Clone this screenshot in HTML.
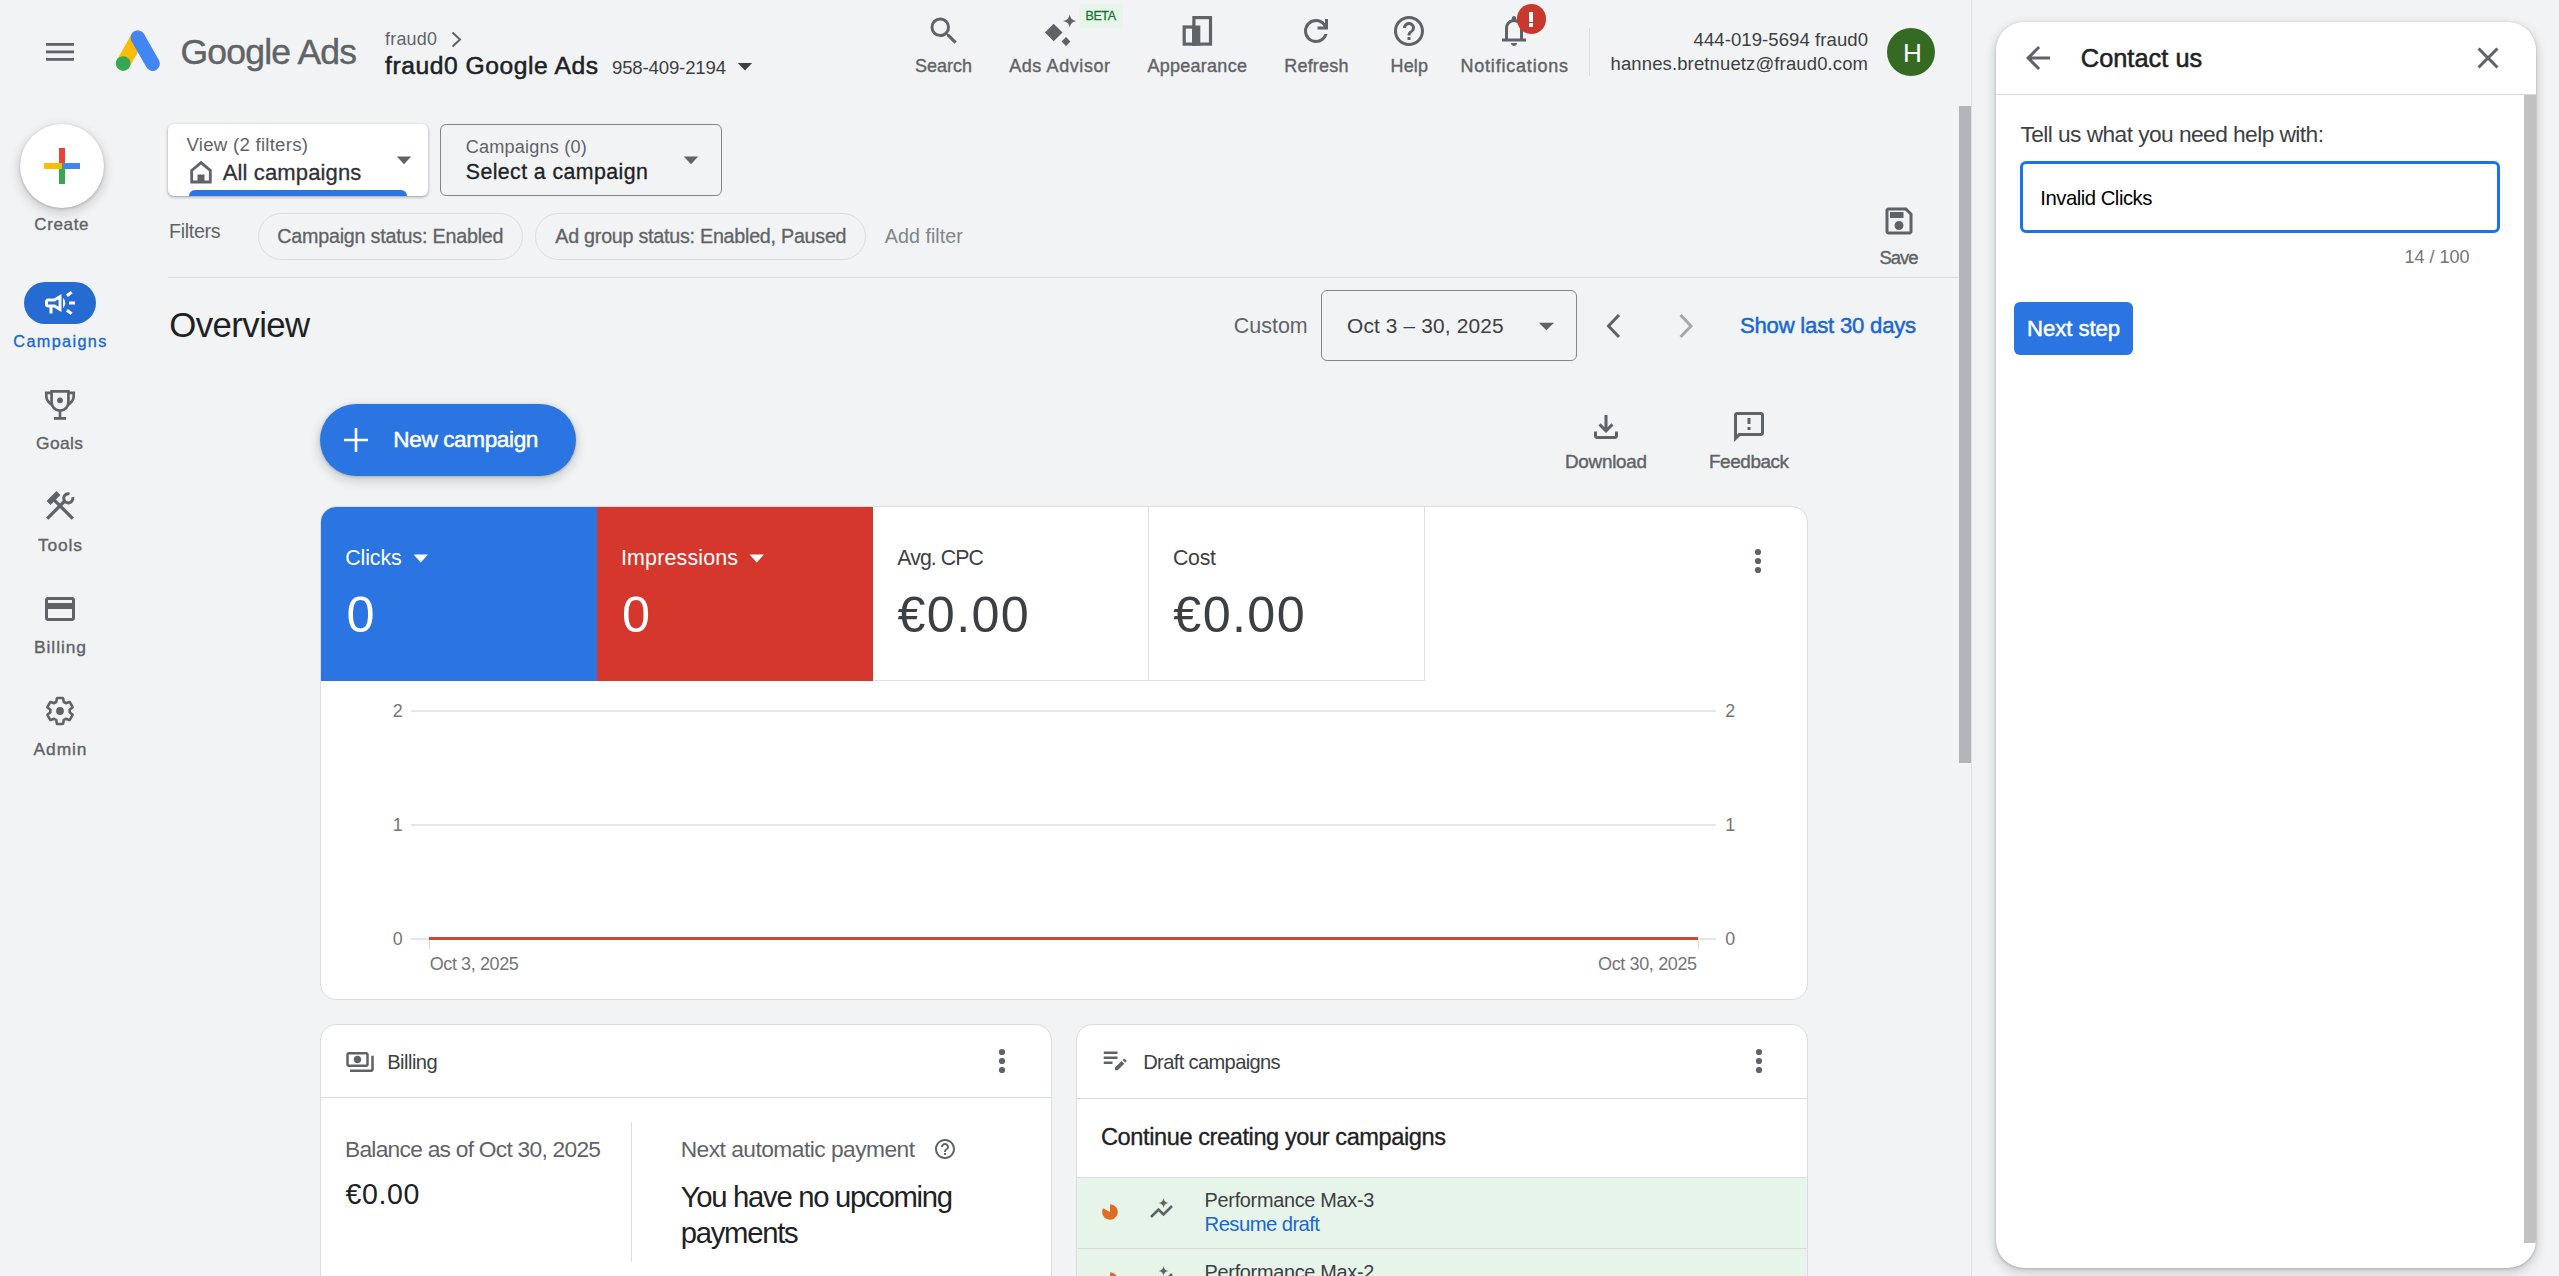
<!DOCTYPE html>
<html><head><meta charset="utf-8"><title>Google Ads</title>
<style>
html,body{margin:0;padding:0;width:2559px;height:1276px;overflow:hidden;background:#f1f3f4;font-family:'Liberation Sans', sans-serif;}
body>*{box-sizing:border-box;}
</style></head><body>
<svg style="position:absolute;left:46px;top:43px;" width="28" height="18" viewBox="0 0 28 18"><rect x="0" y="0" width="28" height="2.8" fill="#5f6368"/><rect x="0" y="7.5" width="28" height="2.8" fill="#5f6368"/><rect x="0" y="15" width="28" height="2.8" fill="#5f6368"/></svg>
<svg style="position:absolute;left:110px;top:25px;" width="56" height="50" viewBox="0 0 56 50">
<line x1="13.2" y1="38.5" x2="27.8" y2="12.6" stroke="#fbbc04" stroke-width="14.4" stroke-linecap="round"/>
<line x1="27.8" y1="12.6" x2="42.7" y2="38.7" stroke="#4285f4" stroke-width="14.4" stroke-linecap="round"/>
<circle cx="13.2" cy="38.5" r="7.3" fill="#34a853"/></svg>
<div style="position:absolute;top:35.25px;font-size:35.50px;line-height:35.50px;color:#5f6368;font-weight:400;white-space:pre;-webkit-text-stroke:0.45px #5f6368;letter-spacing:-0.785px;left:180.50px;">Google Ads</div>
<div style="position:absolute;top:30.82px;font-size:17.93px;line-height:17.93px;color:#5f6368;font-weight:400;white-space:pre;letter-spacing:0.234px;left:385.00px;">fraud0</div>
<svg style="position:absolute;left:450px;top:30px;" width="14" height="19" viewBox="0 0 14 19"><path d="M2.5 2.5 L10 9.5 L2.5 16.5" fill="none" stroke="#5f6368" stroke-width="2"/></svg>
<div style="position:absolute;top:54.34px;font-size:24.64px;line-height:24.64px;color:#202124;font-weight:400;white-space:pre;-webkit-text-stroke:0.52px #202124;letter-spacing:0.562px;left:385.00px;">fraud0 Google Ads</div>
<div style="position:absolute;top:59.48px;font-size:18.57px;line-height:18.57px;color:#3c4043;font-weight:400;white-space:pre;letter-spacing:-0.146px;left:612.00px;">958-409-2194</div>
<svg style="position:absolute;left:737px;top:62px;" width="16" height="9" viewBox="0 0 16 9"><path d="M0.8 1 L15.2 1 L8 8.6 Z" fill="#3c4043"/></svg>
<svg style="position:absolute;left:925.5px;top:12.8px;" width="36" height="36" viewBox="0 0 24 24"><path fill="#5f6368" d="M15.5 14h-.79l-.28-.27A6.471 6.471 0 0 0 16 9.5 6.5 6.5 0 1 0 9.5 16c1.61 0 3.09-.59 4.23-1.57l.27.28v.79l5 4.99L20.49 19l-4.99-5zm-6 0C7.01 14 5 11.99 5 9.5S7.01 5 9.5 5 14 7.01 14 9.5 11.99 14 9.5 14z"/></svg>
<svg style="position:absolute;left:1035px;top:8px;" width="50" height="50" viewBox="0 0 50 50">
<path d="M18.7 15.7 L27.5 24.5 L18.7 33.3 L9.9 24.5 Z" fill="#5f6368"/>
<path d="M31 29.1 L35.4 33.5 L31 37.9 L26.6 33.5 Z" fill="#5f6368"/>
<path d="M34.7 6.4 Q35.6 12.1 41.3 13 Q35.6 13.9 34.7 19.6 Q33.8 13.9 28.1 13 Q33.8 12.1 34.7 6.4 Z" fill="#5f6368"/></svg>
<div style="position:absolute;left:1079.4px;top:4px;width:43.2px;height:24px;background:#e6f4ea;border-radius:4px;"></div>
<div style="position:absolute;top:10.35px;font-size:12.46px;line-height:12.46px;color:#137333;font-weight:400;white-space:pre;-webkit-text-stroke:0.26px #137333;letter-spacing:-0.370px;left:1085.50px;">BETA</div>
<svg style="position:absolute;left:1182px;top:15px;" width="32" height="32" viewBox="0 0 32 32">
<rect x="11.9" y="2.6" width="16.6" height="26.5" fill="none" stroke="#5f6368" stroke-width="3.2"/>
<rect x="2.2" y="12" width="9.7" height="17.1" fill="none" stroke="#5f6368" stroke-width="3.2"/>
<rect x="10.3" y="10.5" width="8" height="20.2" fill="#5f6368"/></svg>
<svg style="position:absolute;left:1298.4px;top:12.8px;" width="36" height="36" viewBox="0 0 24 24"><path fill="#5f6368" d="M12 20q-3.35 0-5.675-2.325Q4 15.35 4 12q0-3.35 2.325-5.675Q8.65 4 12 4q1.725 0 3.3.712 1.575.713 2.7 2.038V4h2v7h-7V9h4.2q-.8-1.4-2.187-2.2Q13.625 6 12 6 9.5 6 7.75 7.75T6 12q0 2.5 1.75 4.25T12 18q1.925 0 3.475-1.1T17.65 14h2.1q-.7 2.65-2.85 4.325Q14.75 20 12 20Z"/></svg>
<svg style="position:absolute;left:1391px;top:12.9px;" width="36" height="36" viewBox="0 0 24 24"><path fill="#5f6368" d="M11 18h2v-2h-2v2zm1-16C6.48 2 2 6.48 2 12s4.48 10 10 10 10-4.48 10-10S17.52 2 12 2zm0 18c-4.41 0-8-3.59-8-8s3.59-8 8-8 8 3.59 8 8-3.59 8-8 8zm0-14c-2.21 0-4 1.79-4 4h2c0-1.1.9-2 2-2s2 .9 2 2c0 2-3 1.75-3 5h2c0-2.25 3-2.5 3-5 0-2.21-1.79-4-4-4z"/></svg>
<svg style="position:absolute;left:1496px;top:13px;" width="36" height="36" viewBox="0 0 24 24"><path fill="#5f6368" d="M4 19v-2h2v-7q0-2.075 1.25-3.688Q8.5 4.7 10.5 4.2v-.7q0-.625.438-1.062Q11.375 2 12 2t1.062.438q.438.437.438 1.062v.7q2 .5 3.25 2.112Q18 7.925 18 10v7h2v2Zm8-7.5ZM12 22q-.825 0-1.412-.587Q10 20.825 10 20h4q0 .825-.588 1.413Q12.825 22 12 22Zm-4-5h8v-7q0-1.65-1.175-2.825Q13.65 6 12 6q-1.65 0-2.825 1.175Q8 8.35 8 10Z"/></svg>
<div style="position:absolute;left:1516.5px;top:4px;width:29.6px;height:29.6px;border-radius:50%;background:#c9382c;"></div>
<div style="position:absolute;left:1529.3px;top:11.6px;width:4.2px;height:10.2px;background:#fff;"></div>
<div style="position:absolute;left:1529.3px;top:23.2px;width:4.2px;height:3.8px;background:#fff;"></div>
<div style="position:absolute;top:57.79px;font-size:17.97px;line-height:17.97px;color:#5f6368;font-weight:400;white-space:pre;-webkit-text-stroke:0.38px #5f6368;letter-spacing:0.013px;left:915.00px;">Search</div>
<div style="position:absolute;top:57.79px;font-size:17.97px;line-height:17.97px;color:#5f6368;font-weight:400;white-space:pre;-webkit-text-stroke:0.38px #5f6368;letter-spacing:0.611px;left:1009.20px;">Ads Advisor</div>
<div style="position:absolute;top:57.79px;font-size:17.97px;line-height:17.97px;color:#5f6368;font-weight:400;white-space:pre;-webkit-text-stroke:0.38px #5f6368;letter-spacing:0.298px;left:1147.40px;">Appearance</div>
<div style="position:absolute;top:57.79px;font-size:17.97px;line-height:17.97px;color:#5f6368;font-weight:400;white-space:pre;-webkit-text-stroke:0.38px #5f6368;letter-spacing:0.213px;left:1284.30px;">Refresh</div>
<div style="position:absolute;top:57.79px;font-size:17.97px;line-height:17.97px;color:#5f6368;font-weight:400;white-space:pre;-webkit-text-stroke:0.38px #5f6368;letter-spacing:0.177px;left:1390.50px;">Help</div>
<div style="position:absolute;top:57.79px;font-size:17.97px;line-height:17.97px;color:#5f6368;font-weight:400;white-space:pre;-webkit-text-stroke:0.38px #5f6368;letter-spacing:0.827px;left:1460.40px;">Notifications</div>
<div style="position:absolute;left:1589px;top:28px;width:1px;height:48px;background:#dadce0;"></div>
<div style="position:absolute;top:31.28px;font-size:18.57px;line-height:18.57px;color:#3c4043;font-weight:400;white-space:pre;letter-spacing:0.056px;right:690.94px;">444-019-5694 fraud0</div>
<div style="position:absolute;top:55.25px;font-size:18.48px;line-height:18.48px;color:#3c4043;font-weight:400;white-space:pre;letter-spacing:0.139px;right:690.86px;">hannes.bretnuetz@fraud0.com</div>
<div style="position:absolute;left:1887px;top:28px;width:48px;height:48px;border-radius:50%;background:#356a22;"></div>
<div style="position:absolute;top:40.02px;font-size:26.09px;line-height:26.09px;color:#fff;font-weight:400;white-space:pre;left:1903.00px;">H</div>
<div style="position:absolute;left:1971px;top:0px;width:1px;height:1276px;background:#dfe1e5;"></div>
<div style="position:absolute;left:1959px;top:106px;width:12px;height:657px;background:#b4b5b8;"></div>
<div style="position:absolute;left:20px;top:124px;width:84px;height:84px;border-radius:50%;background:#fff;box-shadow:0 1px 3px rgba(60,64,67,.3),0 4px 8px 3px rgba(60,64,67,.15);"></div>
<svg style="position:absolute;left:44px;top:148px;" width="36" height="36" viewBox="0 0 36 36">
<rect x="15" y="0" width="6" height="18" fill="#ea4335"/>
<rect x="18" y="15" width="18" height="6" fill="#4285f4"/>
<rect x="15" y="18" width="6" height="18" fill="#34a853"/>
<rect x="0" y="15" width="18" height="6" fill="#fbbc04"/></svg>
<div style="position:absolute;top:217.05px;font-size:16.96px;line-height:16.96px;color:#5f6368;font-weight:400;white-space:pre;-webkit-text-stroke:0.36px #5f6368;letter-spacing:0.671px;left:34.30px;">Create</div>
<div style="position:absolute;left:24px;top:282px;width:72px;height:42px;background:#266bd2;border-radius:21px;"></div>
<svg style="position:absolute;left:42px;top:285px;" width="36" height="36" viewBox="0 0 24 24"><path fill="#fff" d="M18 11v2h4v-2h-4zm-2 6.61c.96.71 2.21 1.65 3.2 2.39.4-.53.8-1.07 1.2-1.6-.99-.74-2.24-1.68-3.2-2.4-.4.54-.8 1.08-1.2 1.61zM20.4 5.6c-.4-.53-.8-1.07-1.2-1.6-.99.74-2.24 1.68-3.2 2.4.4.53.8 1.07 1.2 1.6.96-.72 2.21-1.65 3.2-2.4zM4 9c-1.1 0-2 .9-2 2v2c0 1.1.9 2 2 2h1v4h2v-4h1l5 3V6L8 9H4zm5.03 1.71L11 9.53v4.94l-1.97-1.18-.48-.29H4v-2h4.55l.48-.29zM15.5 12c0-1.33-.58-2.53-1.5-3.35v6.69c.92-.81 1.5-2.01 1.5-3.34z"/></svg>
<div style="position:absolute;top:333.16px;font-size:16.23px;line-height:16.23px;color:#1967d2;font-weight:400;white-space:pre;-webkit-text-stroke:0.34px #1967d2;letter-spacing:1.369px;left:13.30px;">Campaigns</div>
<svg style="position:absolute;left:0;top:0;overflow:visible" width="1" height="1"><g fill="none" stroke="#5f6368" stroke-width="2.7"><path d="M51.6 391.4 H68.4 V402.3 A8.4 8.4 0 0 1 51.6 402.3 Z"/><path d="M51.6 392.8 H46.3 V396.5 Q46.3 400.5 51.8 404.8"/><path d="M68.4 392.8 H73.7 V396.5 Q73.7 400.5 68.2 404.8"/></g><circle cx="60" cy="400.3" r="2.9" fill="#5f6368"/><rect x="58.7" y="410" width="2.6" height="8" fill="#5f6368"/><rect x="54" y="417" width="12" height="2.8" fill="#5f6368"/></svg>
<div style="position:absolute;top:435.28px;font-size:17.39px;line-height:17.39px;color:#5f6368;font-weight:400;white-space:pre;-webkit-text-stroke:0.37px #5f6368;letter-spacing:0.402px;left:36.00px;">Goals</div>
<svg style="position:absolute;left:0;top:0;overflow:visible" width="1" height="1"><g stroke="#5f6368" stroke-width="3.3" fill="none"><line x1="47.2" y1="518.6" x2="65.3" y2="500.5"/><line x1="72.8" y1="518.6" x2="54" y2="499.8"/><path d="M72.74 497.1 A4.6 4.6 0 1 1 69.49 493.86" stroke-width="3"/></g><path d="M60.43 495.03 L56.47 491.07 L46.57 500.97 L50.53 504.93 Z" fill="#5f6368"/></svg>
<div style="position:absolute;top:537.08px;font-size:17.39px;line-height:17.39px;color:#5f6368;font-weight:400;white-space:pre;-webkit-text-stroke:0.37px #5f6368;letter-spacing:0.859px;left:38.00px;">Tools</div>
<svg style="position:absolute;left:42px;top:591px;" width="36" height="36" viewBox="0 0 24 24"><path fill="#5f6368" d="M20 4H4c-1.11 0-1.99.89-1.99 2L2 18c0 1.11.89 2 2 2h16c1.11 0 2-.89 2-2V6c0-1.11-.89-2-2-2zm0 14H4v-6h16v6zm0-10H4V6h16v2z"/></svg>
<div style="position:absolute;top:638.98px;font-size:17.39px;line-height:17.39px;color:#5f6368;font-weight:400;white-space:pre;-webkit-text-stroke:0.37px #5f6368;letter-spacing:0.940px;left:34.00px;">Billing</div>
<svg style="position:absolute;left:42px;top:693px" width="36" height="36" viewBox="0 0 24 24"><path fill="none" stroke="#5f6368" stroke-width="1.9" stroke-linejoin="round" d="M19.14 12.94c.04-.3.06-.61.06-.94 0-.32-.02-.64-.07-.94l2.03-1.58a.49.49 0 0 0 .12-.61l-1.92-3.32a.488.488 0 0 0-.59-.22l-2.39.96c-.5-.38-1.03-.7-1.62-.94l-.36-2.54a.484.484 0 0 0-.48-.41h-3.84c-.24 0-.43.17-.47.41l-.36 2.54c-.59.24-1.13.57-1.62.94l-2.39-.96c-.22-.08-.47 0-.59.22L2.74 8.87c-.12.21-.08.47.12.61l2.03 1.58c-.05.3-.09.63-.09.94s.02.64.07.94l-2.03 1.58a.49.49 0 0 0-.12.61l1.92 3.32c.12.22.37.29.59.22l2.39-.96c.5.38 1.03.7 1.62.94l.36 2.54c.05.24.24.41.48.41h3.840c.24 0 .44-.17.47-.41l.36-2.54c.59-.24 1.13-.56 1.62-.94l2.39.96c.22.08.47 0 .59-.22l1.92-3.32c.12-.22.07-.47-.12-.61l-2.01-1.58z" transform="translate(1.2 1.2) scale(0.9)"/><circle cx="12" cy="12" r="2.6" fill="#5f6368"/></svg>
<div style="position:absolute;top:740.88px;font-size:17.39px;line-height:17.39px;color:#5f6368;font-weight:400;white-space:pre;-webkit-text-stroke:0.37px #5f6368;letter-spacing:0.938px;left:33.50px;">Admin</div>
<div style="position:absolute;left:168px;top:124px;width:260px;height:72px;background:#fff;border-radius:6px;overflow:hidden;box-shadow:0 1px 2px rgba(60,64,67,.3),0 1px 3px 1px rgba(60,64,67,.15);"><div style="position:absolute;left:21px;top:66px;width:218px;height:12px;border-radius:6px;background:#2a75e1"></div></div>
<div style="position:absolute;top:135.97px;font-size:18.70px;line-height:18.70px;color:#5f6368;font-weight:400;white-space:pre;letter-spacing:0.237px;left:186.40px;">View (2 filters)</div>
<svg style="position:absolute;left:187px;top:157px" width="28" height="28" viewBox="0 0 28 28"><path d="M4.7 13.5 L14 5.6 L23.3 13.5 V25 H4.7 Z" fill="none" stroke="#5f6368" stroke-width="2.8" stroke-linejoin="miter"/><rect x="10.5" y="17.5" width="7" height="7.5" fill="#5f6368"/></svg>
<div style="position:absolute;top:161.55px;font-size:22.03px;line-height:22.03px;color:#303134;font-weight:400;white-space:pre;-webkit-text-stroke:0.3px #303134;letter-spacing:0.136px;left:222.70px;">All campaigns</div>
<svg style="position:absolute;left:396px;top:156px;" width="16" height="9" viewBox="0 0 16 9"><path d="M0.8 0.6 L15.2 0.6 L8 8.2 Z" fill="#5f6368"/></svg>
<div style="position:absolute;left:440px;top:124px;width:282px;height:72px;border:1px solid #80868b;border-radius:6px;box-sizing:border-box;"></div>
<div style="position:absolute;top:138.36px;font-size:18.12px;line-height:18.12px;color:#5f6368;font-weight:400;white-space:pre;letter-spacing:0.186px;left:465.80px;">Campaigns (0)</div>
<div style="position:absolute;top:161.87px;font-size:21.30px;line-height:21.30px;color:#202124;font-weight:400;white-space:pre;-webkit-text-stroke:0.3px #202124;letter-spacing:0.424px;left:465.80px;">Select a campaign</div>
<svg style="position:absolute;left:683px;top:156px;" width="16" height="9" viewBox="0 0 16 9"><path d="M0.8 0.6 L15.2 0.6 L8 8.2 Z" fill="#5f6368"/></svg>
<div style="position:absolute;top:222.12px;font-size:19.71px;line-height:19.71px;color:#5f6368;font-weight:400;white-space:pre;letter-spacing:-0.340px;left:169.00px;">Filters</div>
<div style="position:absolute;left:258px;top:213px;width:265px;height:47px;border:1px solid #dadce0;border-radius:24px;box-sizing:border-box;"></div>
<div style="position:absolute;top:226.82px;font-size:19.71px;line-height:19.71px;color:#5f6368;font-weight:400;white-space:pre;-webkit-text-stroke:0.3px #5f6368;letter-spacing:-0.200px;left:277.20px;">Campaign status: Enabled</div>
<div style="position:absolute;left:535px;top:213px;width:331px;height:47px;border:1px solid #dadce0;border-radius:24px;box-sizing:border-box;"></div>
<div style="position:absolute;top:226.82px;font-size:19.71px;line-height:19.71px;color:#5f6368;font-weight:400;white-space:pre;-webkit-text-stroke:0.3px #5f6368;letter-spacing:-0.243px;left:555.30px;">Ad group status: Enabled, Paused</div>
<div style="position:absolute;top:226.82px;font-size:19.71px;line-height:19.71px;color:#80868b;font-weight:400;white-space:pre;letter-spacing:0.026px;left:884.80px;">Add filter</div>
<svg style="position:absolute;left:1881px;top:202.8px;" width="36" height="36" viewBox="0 0 24 24"><path fill="#5f6368" d="M17 3H5c-1.11 0-2 .9-2 2v14c0 1.1.89 2 2 2h14c1.1 0 2-.89 2-2V7l-4-4zm2 16H5V5h11.17L19 7.83V19zm-7-7c-1.66 0-3 1.34-3 3s1.34 3 3 3 3-1.34 3-3-1.34-3-3-3zM6 6h9v4H6z"/></svg>
<div style="position:absolute;top:249.22px;font-size:18.41px;line-height:18.41px;color:#5f6368;font-weight:400;white-space:pre;-webkit-text-stroke:0.39px #5f6368;letter-spacing:-0.974px;left:1879.40px;">Save</div>
<div style="position:absolute;left:168px;top:277px;width:1791px;height:1px;background:#dadce0;"></div>
<div style="position:absolute;top:308.46px;font-size:34.78px;line-height:34.78px;color:#202124;font-weight:400;white-space:pre;letter-spacing:-0.556px;left:169.20px;">Overview</div>
<div style="position:absolute;top:315.54px;font-size:21.45px;line-height:21.45px;color:#5f6368;font-weight:400;white-space:pre;letter-spacing:0.028px;left:1233.70px;">Custom</div>
<div style="position:absolute;left:1321px;top:290px;width:256px;height:71px;border:1px solid #80868b;border-radius:6px;box-sizing:border-box;"></div>
<div style="position:absolute;top:316.03px;font-size:20.87px;line-height:20.87px;color:#3c4043;font-weight:400;white-space:pre;letter-spacing:0.157px;left:1347.00px;">Oct 3 – 30, 2025</div>
<svg style="position:absolute;left:1538px;top:322px;" width="17" height="9" viewBox="0 0 17 9"><path d="M0.8 0.8 L16 0.8 L8.4 8.3 Z" fill="#5f6368"/></svg>
<svg style="position:absolute;left:1600px;top:310px;" width="26" height="32" viewBox="0 0 26 32"><path d="M19 5 L8.5 16 L19 27" fill="none" stroke="#616161" stroke-width="3"/></svg>
<svg style="position:absolute;left:1673px;top:310px;" width="26" height="32" viewBox="0 0 26 32"><path d="M7.5 5 L18 16 L7.5 27" fill="none" stroke="#a8a8a8" stroke-width="3"/></svg>
<div style="position:absolute;top:315.43px;font-size:22.17px;line-height:22.17px;color:#1a66d2;font-weight:400;white-space:pre;-webkit-text-stroke:0.47px #1a66d2;letter-spacing:-0.221px;left:1739.90px;">Show last 30 days</div>
<div style="position:absolute;left:320px;top:404px;width:256px;height:72px;border-radius:36px;background:#2a75e1;box-shadow:0 1px 3px rgba(60,64,67,.3),0 4px 8px 3px rgba(60,64,67,.15);"></div>
<svg style="position:absolute;left:344px;top:428px;" width="24" height="24" viewBox="0 0 24 24"><path d="M12 0 V24 M0 12 H24" stroke="#fff" stroke-width="2.6"/></svg>
<div style="position:absolute;top:429.26px;font-size:22.61px;line-height:22.61px;color:#fff;font-weight:400;white-space:pre;-webkit-text-stroke:0.47px #fff;letter-spacing:-0.405px;left:393.30px;">New campaign</div>
<svg style="position:absolute;left:1588px;top:408.6px;" width="36" height="36" viewBox="0 0 24 24"><path fill="#5f6368" d="M12 16l-5-5 1.4-1.45 2.6 2.6V4h2v8.15l2.6-2.6L17 11l-5 5zm-6 4q-.825 0-1.413-.588Q4 18.825 4 18v-3h2v3h12v-3h2v3q0 .825-.588 1.413Q18.825 20 18 20H6z"/></svg>
<div style="position:absolute;top:452.95px;font-size:18.84px;line-height:18.84px;color:#5f6368;font-weight:400;white-space:pre;-webkit-text-stroke:0.4px #5f6368;letter-spacing:-0.248px;left:1565.00px;">Download</div>
<svg style="position:absolute;left:1731px;top:409px;" width="36" height="36" viewBox="0 0 24 24"><path fill="#5f6368" d="M20 2H4c-1.1 0-1.99.9-1.99 2L2 22l4-4h14c1.1 0 2-.9 2-2V4c0-1.1-.9-2-2-2zm0 14H5.17l-.59.59-.58.58V4h16v12zm-9-4h2v2h-2zm0-6h2v4h-2z"/></svg>
<div style="position:absolute;top:452.95px;font-size:18.84px;line-height:18.84px;color:#5f6368;font-weight:400;white-space:pre;-webkit-text-stroke:0.4px #5f6368;letter-spacing:-0.384px;left:1709.00px;">Feedback</div>
<div style="position:absolute;left:320px;top:506px;width:1488px;height:494px;background:#fff;border:1px solid #dadce0;border-radius:16px;box-sizing:border-box;overflow:hidden;"><div style="position:absolute;left:0;top:0;width:276px;height:174px;background:#2a75e1;"></div><div style="position:absolute;left:276px;top:0;width:276px;height:174px;background:#d5372c;"></div><div style="position:absolute;left:827px;top:0;width:1px;height:174px;background:#e0e0e0;"></div><div style="position:absolute;left:552px;top:173px;width:552px;height:1px;background:#e0e0e0;"></div><div style="position:absolute;left:1103px;top:0;width:1px;height:174px;background:#e0e0e0;"></div></div>
<div style="position:absolute;top:547.54px;font-size:21.45px;line-height:21.45px;color:#fff;font-weight:400;white-space:pre;letter-spacing:-0.154px;left:345.30px;">Clicks</div>
<svg style="position:absolute;left:413px;top:554px;" width="16" height="9" viewBox="0 0 16 9"><path d="M0.5 0.6 L15 0.6 L7.75 8.4 Z" fill="#fff"/></svg>
<div style="position:absolute;top:589.71px;font-size:50.43px;line-height:50.43px;color:#fff;font-weight:400;white-space:pre;left:346.40px;">0</div>
<div style="position:absolute;top:547.54px;font-size:21.45px;line-height:21.45px;color:#fff;font-weight:400;white-space:pre;letter-spacing:0.144px;left:621.00px;">Impressions</div>
<svg style="position:absolute;left:749px;top:554px;" width="16" height="9" viewBox="0 0 16 9"><path d="M0.5 0.6 L15 0.6 L7.75 8.4 Z" fill="#fff"/></svg>
<div style="position:absolute;top:589.71px;font-size:50.43px;line-height:50.43px;color:#fff;font-weight:400;white-space:pre;left:622.00px;">0</div>
<div style="position:absolute;top:547.87px;font-size:21.30px;line-height:21.30px;color:#3c4043;font-weight:400;white-space:pre;letter-spacing:-0.918px;left:897.30px;">Avg. CPC</div>
<div style="position:absolute;top:589.83px;font-size:50.29px;line-height:50.29px;color:#3c4043;font-weight:400;white-space:pre;letter-spacing:1.376px;left:897.50px;">€0.00</div>
<div style="position:absolute;top:547.87px;font-size:21.30px;line-height:21.30px;color:#3c4043;font-weight:400;white-space:pre;letter-spacing:-0.266px;left:1173.00px;">Cost</div>
<div style="position:absolute;top:589.83px;font-size:50.29px;line-height:50.29px;color:#3c4043;font-weight:400;white-space:pre;letter-spacing:1.376px;left:1173.30px;">€0.00</div>
<svg style="position:absolute;left:1752.4px;top:545.9px" width="12" height="30" viewBox="0 0 12 30"><circle cx="6" cy="6" r="3.1" fill="#5f6368"/><circle cx="6" cy="15" r="3.1" fill="#5f6368"/><circle cx="6" cy="24" r="3.1" fill="#5f6368"/></svg>
<div style="position:absolute;left:410.6px;top:709.5px;width:1305px;height:2px;background:#e6e6e6;"></div>
<div style="position:absolute;top:702.78px;font-size:17.86px;line-height:17.86px;color:#757575;font-weight:400;white-space:pre;left:392.80px;">2</div>
<div style="position:absolute;top:702.78px;font-size:17.86px;line-height:17.86px;color:#757575;font-weight:400;white-space:pre;left:1725.30px;">2</div>
<div style="position:absolute;left:410.6px;top:823.5px;width:1305px;height:2px;background:#e6e6e6;"></div>
<div style="position:absolute;top:816.78px;font-size:17.86px;line-height:17.86px;color:#757575;font-weight:400;white-space:pre;left:392.80px;">1</div>
<div style="position:absolute;top:816.78px;font-size:17.86px;line-height:17.86px;color:#757575;font-weight:400;white-space:pre;left:1725.30px;">1</div>
<div style="position:absolute;left:410.6px;top:937.5px;width:1305px;height:2px;background:#e6e6e6;"></div>
<div style="position:absolute;top:930.78px;font-size:17.86px;line-height:17.86px;color:#757575;font-weight:400;white-space:pre;left:392.80px;">0</div>
<div style="position:absolute;top:930.78px;font-size:17.86px;line-height:17.86px;color:#757575;font-weight:400;white-space:pre;left:1725.30px;">0</div>
<div style="position:absolute;left:428.8px;top:937px;width:1269.2px;height:3px;background:#d84335;"></div>
<div style="position:absolute;left:428.5px;top:940px;width:1px;height:9px;background:#dadce0;"></div>
<div style="position:absolute;left:1697.5px;top:940px;width:1px;height:9px;background:#dadce0;"></div>
<div style="position:absolute;top:954.96px;font-size:18.00px;line-height:18.00px;color:#757575;font-weight:400;white-space:pre;letter-spacing:-0.396px;left:429.70px;">Oct 3, 2025</div>
<div style="position:absolute;top:954.96px;font-size:18.00px;line-height:18.00px;color:#757575;font-weight:400;white-space:pre;letter-spacing:-0.362px;right:862.26px;">Oct 30, 2025</div>
<div style="position:absolute;left:320px;top:1024px;width:732px;height:300px;background:#fff;border:1px solid #dadce0;border-radius:16px;box-sizing:border-box;"></div>
<div style="position:absolute;left:321px;top:1097px;width:730px;height:1px;background:#dadce0;"></div>
<svg style="position:absolute;left:344.5px;top:1047px;" width="30" height="30" viewBox="0 0 24 24"><path fill="#5f6368" d="M19 14V6c0-1.1-.9-2-2-2H3c-1.1 0-2 .9-2 2v8c0 1.1.9 2 2 2h14c1.1 0 2-.9 2-2zm-2 0H3V6h14v8zm-7-7c-1.66 0-3 1.34-3 3s1.34 3 3 3 3-1.34 3-3-1.34-3-3-3zm13 0v11c0 1.1-.9 2-2 2H4v-2h17V7h2z"/></svg>
<div style="position:absolute;top:1051.85px;font-size:20.14px;line-height:20.14px;color:#3c4043;font-weight:400;white-space:pre;letter-spacing:-0.534px;left:387.20px;">Billing</div>
<svg style="position:absolute;left:996.4px;top:1046px" width="12" height="30" viewBox="0 0 12 30"><circle cx="6" cy="6" r="3.1" fill="#5f6368"/><circle cx="6" cy="15" r="3.1" fill="#5f6368"/><circle cx="6" cy="24" r="3.1" fill="#5f6368"/></svg>
<div style="position:absolute;left:631px;top:1122px;width:1px;height:140px;background:#dadce0;"></div>
<div style="position:absolute;top:1138.14px;font-size:22.75px;line-height:22.75px;color:#5f6368;font-weight:400;white-space:pre;letter-spacing:-0.738px;left:345.00px;">Balance as of Oct 30, 2025</div>
<div style="position:absolute;top:1180.41px;font-size:28.57px;line-height:28.57px;color:#202124;font-weight:400;white-space:pre;letter-spacing:0.629px;left:345.50px;">€0.00</div>
<div style="position:absolute;top:1138.14px;font-size:22.75px;line-height:22.75px;color:#5f6368;font-weight:400;white-space:pre;letter-spacing:-0.524px;left:680.70px;">Next automatic payment</div>
<svg style="position:absolute;left:933px;top:1137px;" width="24" height="24" viewBox="0 0 24 24"><path fill="#5f6368" d="M11 18h2v-2h-2v2zm1-16C6.48 2 2 6.48 2 12s4.48 10 10 10 10-4.48 10-10S17.52 2 12 2zm0 18c-4.41 0-8-3.59-8-8s3.59-8 8-8 8 3.59 8 8-3.59 8-8 8zm0-14c-2.21 0-4 1.79-4 4h2c0-1.1.9-2 2-2s2 .9 2 2c0 2-3 1.75-3 5h2c0-2.25 3-2.5 3-5 0-2.21-1.79-4-4-4z"/></svg>
<div style="position:absolute;top:1182.22px;font-size:29.28px;line-height:29.28px;color:#202124;font-weight:400;white-space:pre;letter-spacing:-1.284px;left:680.70px;">You have no upcoming</div>
<div style="position:absolute;top:1218.22px;font-size:29.28px;line-height:29.28px;color:#202124;font-weight:400;white-space:pre;letter-spacing:-1.270px;left:680.70px;">payments</div>
<div style="position:absolute;left:1076px;top:1024px;width:732px;height:300px;background:#fff;border:1px solid #dadce0;border-radius:16px;box-sizing:border-box;overflow:hidden;"><div style="position:absolute;left:0;top:72.5px;width:732px;height:1px;background:#dadce0"></div><div style="position:absolute;left:0;top:151.5px;width:732px;height:1px;background:#dadce0"></div><div style="position:absolute;left:0;top:152.5px;width:732px;height:200px;background:#e6f4ea"></div><div style="position:absolute;left:0;top:222.5px;width:732px;height:1px;background:#dadce0"></div></div>
<svg style="position:absolute;left:1099.5px;top:1044px;" width="30" height="30" viewBox="0 0 24 24"><path fill="#5f6368" d="M3 10h11v2H3zm0-2h11V6H3zm0 8h7v-2H3zm15.01-3.13.71-.71a.996.996 0 0 1 1.41 0l.71.71c.39.39.39 1.02 0 1.41l-.71.71-2.12-2.12zm-.71.71-5.3 5.3V21h2.12l5.3-5.3-2.12-2.12z"/></svg>
<div style="position:absolute;top:1051.95px;font-size:20.14px;line-height:20.14px;color:#3c4043;font-weight:400;white-space:pre;letter-spacing:-0.645px;left:1143.20px;">Draft campaigns</div>
<svg style="position:absolute;left:1752.5px;top:1046px" width="12" height="30" viewBox="0 0 12 30"><circle cx="6" cy="6" r="3.1" fill="#5f6368"/><circle cx="6" cy="15" r="3.1" fill="#5f6368"/><circle cx="6" cy="24" r="3.1" fill="#5f6368"/></svg>
<div style="position:absolute;top:1126.10px;font-size:23.62px;line-height:23.62px;color:#202124;font-weight:400;white-space:pre;-webkit-text-stroke:0.3px #202124;letter-spacing:-0.428px;left:1101.00px;">Continue creating your campaigns</div>
<svg style="position:absolute;left:1101px;top:1203px" width="18" height="18" viewBox="0 0 18 18"><path d="M9 9 L9 1.2 A7.8 7.8 0 1 1 2.2 5.2 Z" fill="#dc6d25"/></svg>
<svg style="position:absolute;left:1148px;top:1196px" width="28" height="26" viewBox="0 0 28 26"><path d="M3 21 L10.5 13.5 L15.5 18.5 L24 10" fill="none" stroke="#5f6368" stroke-width="2.6"/><path d="M15.5 2 Q16 6.5 20.5 7 Q16 7.5 15.5 12 Q15 7.5 10.5 7 Q15 6.5 15.5 2Z" fill="#5f6368"/></svg>
<div style="position:absolute;top:1191.09px;font-size:19.86px;line-height:19.86px;color:#3c4043;font-weight:400;white-space:pre;letter-spacing:-0.291px;left:1204.60px;">Performance Max-3</div>
<div style="position:absolute;top:1213.62px;font-size:20.29px;line-height:20.29px;color:#1b66d1;font-weight:400;white-space:pre;letter-spacing:-0.578px;left:1204.60px;">Resume draft</div>
<svg style="position:absolute;left:1101px;top:1271px" width="18" height="18" viewBox="0 0 18 18"><path d="M9 9 L9 1.2 A7.8 7.8 0 1 1 2.2 5.2 Z" fill="#dc6d25"/></svg>
<svg style="position:absolute;left:1148px;top:1264px" width="28" height="26" viewBox="0 0 28 26"><path d="M3 21 L10.5 13.5 L15.5 18.5 L24 10" fill="none" stroke="#5f6368" stroke-width="2.6"/><path d="M15.5 2 Q16 6.5 20.5 7 Q16 7.5 15.5 12 Q15 7.5 10.5 7 Q15 6.5 15.5 2Z" fill="#5f6368"/></svg>
<div style="position:absolute;top:1263.19px;font-size:19.86px;line-height:19.86px;color:#3c4043;font-weight:400;white-space:pre;letter-spacing:-0.291px;left:1204.60px;">Performance Max-2</div>
<div style="position:absolute;left:1996px;top:22px;width:540px;height:1246px;background:#fff;border-radius:28px;box-shadow:0 1px 3px rgba(60,64,67,.3),0 4px 8px 3px rgba(60,64,67,.15);overflow:hidden;"><div style="position:absolute;left:0;top:72px;width:540px;height:1px;background:#dadce0"></div><div style="position:absolute;left:528px;top:73px;width:12px;height:1148px;background:#c1c1c1"></div></div>
<svg style="position:absolute;left:2020.3px;top:40.3px;" width="36" height="36" viewBox="0 0 24 24"><path fill="#5f6368" d="M20 11H7.83l5.59-5.59L12 4l-8 8 8 8 1.41-1.41L7.83 13H20v-2z"/></svg>
<div style="position:absolute;top:45.53px;font-size:25.36px;line-height:25.36px;color:#202124;font-weight:400;white-space:pre;-webkit-text-stroke:0.53px #202124;letter-spacing:0.018px;left:2080.80px;">Contact us</div>
<svg style="position:absolute;left:2469.7px;top:40.1px;" width="36" height="36" viewBox="0 0 24 24"><path fill="#5f6368" d="M19 6.41L17.59 5 12 10.59 6.41 5 5 6.41 10.59 12 5 17.59 6.41 19 12 13.41 17.59 19 19 17.59 13.41 12z"/></svg>
<div style="position:absolute;top:123.34px;font-size:22.75px;line-height:22.75px;color:#3c4043;font-weight:400;white-space:pre;letter-spacing:-0.569px;left:2020.40px;">Tell us what you need help with:</div>
<div style="position:absolute;left:2020px;top:161px;width:480px;height:72px;border:3px solid #1a73e8;border-radius:6px;box-sizing:border-box;"></div>
<div style="position:absolute;top:187.92px;font-size:20.29px;line-height:20.29px;color:#000;font-weight:400;white-space:pre;letter-spacing:-0.481px;left:2040.30px;">Invalid Clicks</div>
<div style="position:absolute;top:247.56px;font-size:18.00px;line-height:18.00px;color:#757575;font-weight:400;white-space:pre;letter-spacing:0.020px;left:2404.40px;">14 / 100</div>
<div style="position:absolute;left:2014px;top:302px;width:119px;height:53px;border-radius:6px;background:#2a75e1;"></div>
<div style="position:absolute;top:318.43px;font-size:22.17px;line-height:22.17px;color:#fff;font-weight:400;white-space:pre;-webkit-text-stroke:0.47px #fff;letter-spacing:-0.074px;left:2027.10px;">Next step</div>
</body></html>
